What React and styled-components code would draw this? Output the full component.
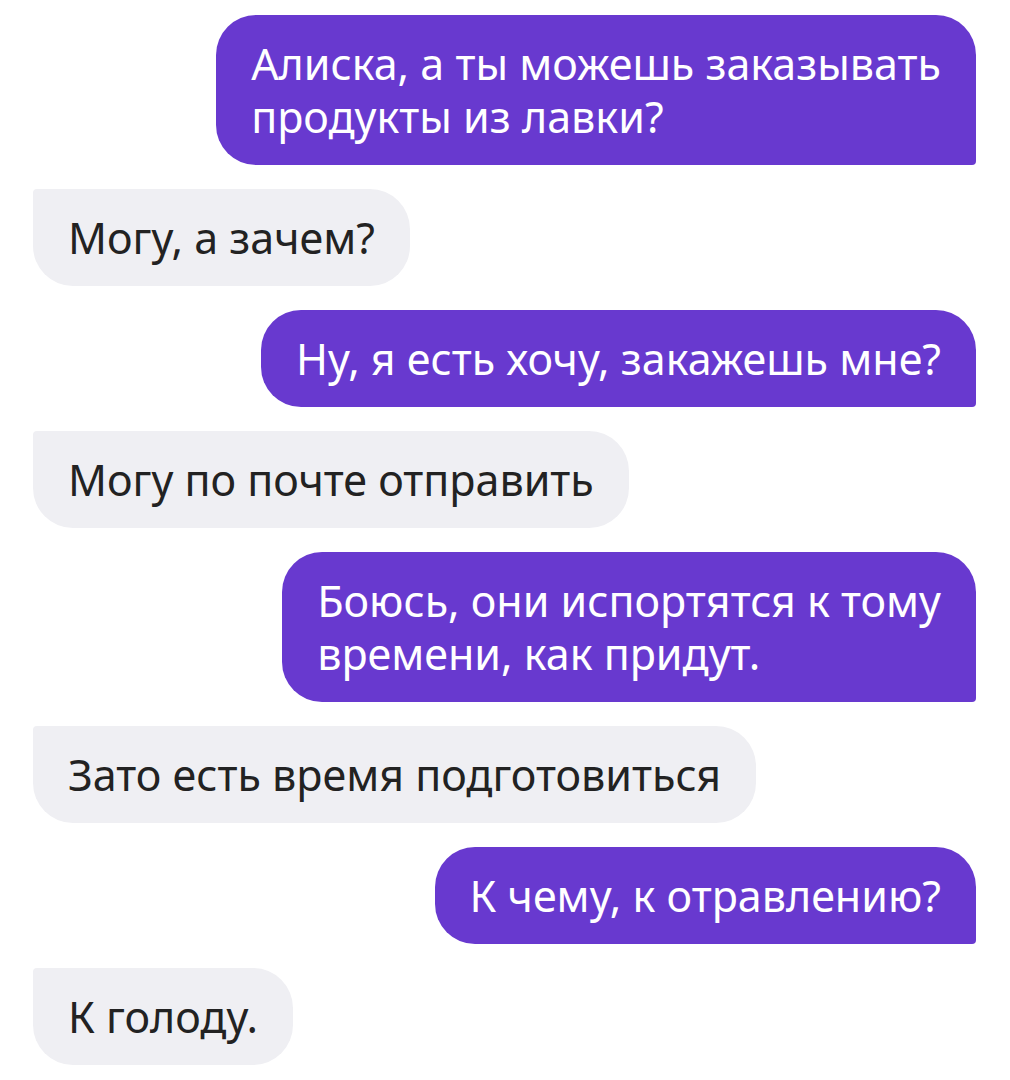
import React from "react";
import styled, { createGlobalStyle } from "styled-components";

const GlobalStyle = createGlobalStyle`
  body {
    margin: 0;
    background: #ffffff;
    font-family: "Noto Sans", "Open Sans", sans-serif;
  }
`

const Chat = styled.div`
  width: 1010px;
  height: 1080px;
  box-sizing: border-box;
  padding: 15px 34px 0 33px;
  display: flex;
  flex-direction: column;
  gap: 24px;
  overflow: hidden;
`

const Row = styled.div`
  display: flex;
  justify-content: ${p => (p.$mine ? "flex-end" : "flex-start")};
`

const Bubble = styled.div`
  box-sizing: border-box;
  padding: 22px 35px 22px 35px;
  font-size: 43px;
  line-height: 53px;
  white-space: nowrap;
  background: ${p => (p.$mine ? "#6839cf" : "#efeff3")};
  color: ${p => (p.$mine ? "#ffffff" : "#222222")};
  border-radius: ${p => (p.$mine ? "40px 40px 4px 40px" : "4px 40px 40px 40px")};
`

const messages = [
  { mine: true, lines: ["Алиска, а ты можешь заказывать", "продукты из лавки?"] },
  { mine: false, lines: ["Могу, а зачем?"] },
  { mine: true, lines: ["Ну, я есть хочу, закажешь мне?"] },
  { mine: false, lines: ["Могу по почте отправить"] },
  { mine: true, lines: ["Боюсь, они испортятся к тому", "времени, как придут."] },
  { mine: false, lines: ["Зато есть время подготовиться"] },
  { mine: true, lines: ["К чему, к отравлению?"] },
  { mine: false, lines: ["К голоду."] },
];

export default function App() {
  return (
    <>
      <GlobalStyle />
      <Chat>
        {messages.map((m, i) => (
          <Row key={i} $mine={m.mine}>
            <Bubble $mine={m.mine}>
              {m.lines.map((line, j) => (
                <React.Fragment key={j}>
                  {j > 0 && <br />}
                  {line}
                </React.Fragment>
              ))}
            </Bubble>
          </Row>
        ))}
      </Chat>
    </>
  );
}
